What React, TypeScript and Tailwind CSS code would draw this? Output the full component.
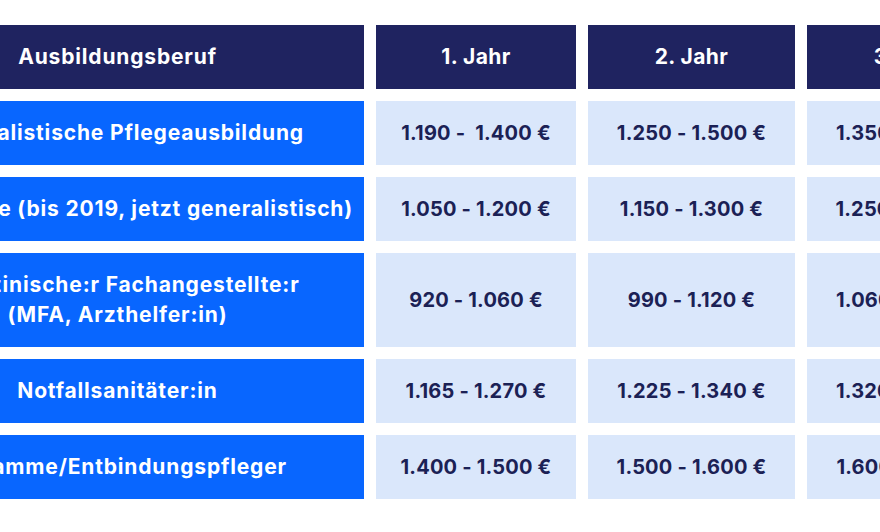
const rows = [
  {
    beruf: "Generalistische Pflegeausbildung",
    jahre: ["1.190 -  1.400 €", "1.250 - 1.500 €", "1.350 - 1.600 €"],
    tall: false,
  },
  {
    beruf: "Altenpflege (bis 2019, jetzt generalistisch)",
    jahre: ["1.050 - 1.200 €", "1.150 - 1.300 €", "1.250 - 1.400 €"],
    tall: false,
  },
  {
    beruf: "Medizinische:r Fachangestellte:r\n(MFA, Arzthelfer:in)",
    jahre: ["920 - 1.060 €", "990 - 1.120 €", "1.060 - 1.220 €"],
    tall: true,
  },
  {
    beruf: "Notfallsanitäter:in",
    jahre: ["1.165 - 1.270 €", "1.225 - 1.340 €", "1.320 - 1.450 €"],
    tall: false,
  },
  {
    beruf: "Hebamme/Entbindungspfleger",
    jahre: ["1.400 - 1.500 €", "1.500 - 1.600 €", "1.600 - 1.700 €"],
    tall: false,
  },
];

export default function App() {
  return (
    <div className="h-[532px] w-[880px] overflow-hidden bg-white pt-[25px] font-['Inter','Open_Sans',sans-serif] font-bold">
      <div className="ml-[-129px] grid w-max grid-cols-[493px_200px_207px_207px] gap-[12px]">
        <div className="flex h-16 items-center justify-center bg-[#1f2360] text-[21px] tracking-[0.04em] text-white">
          Ausbildungsberuf
        </div>
        {["1. Jahr", "2. Jahr", "3. Jahr"].map((j) => (
          <div
            key={j}
            className="flex h-16 items-center justify-center bg-[#1f2360] text-[21px] tracking-[0.02em] text-white"
          >
            {j}
          </div>
        ))}

        {rows.map((r) => (
          <Row key={r.beruf} {...r} />
        ))}
      </div>
    </div>
  );
}

function Row({
  beruf,
  jahre,
  tall,
}: {
  beruf: string;
  jahre: string[];
  tall: boolean;
}) {
  const h = tall ? "h-[94px]" : "h-16";
  return (
    <>
      <div
        className={`flex ${h} items-center justify-center whitespace-pre-line bg-[#0866ff] text-center text-[21px] leading-[30px] tracking-[0.04em] text-white`}
      >
        {beruf}
      </div>
      {jahre.map((j, i) => (
        <div
          key={i}
          className={`flex ${h} items-center justify-center whitespace-pre bg-[#dae7fb] text-[20px] tracking-[0.01em] text-[#1b2155]`}
        >
          {j}
        </div>
      ))}
    </>
  );
}
